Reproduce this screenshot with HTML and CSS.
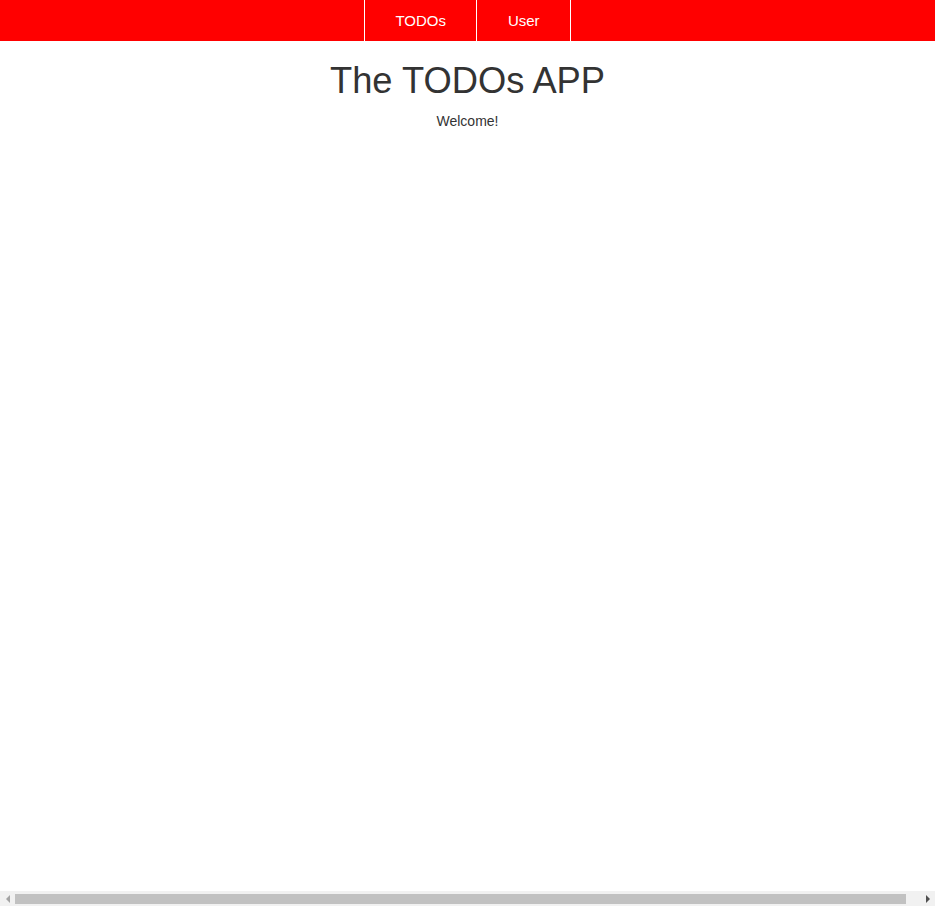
FILE: index.html
```html
<!DOCTYPE html>
<html>
<head>
<meta charset="utf-8">
<title>The TODOs APP</title>
<link rel="stylesheet" href="styles.css">
</head>
<body>
<nav class="topbar">
  <ul class="menu">
    <li class="menu-item"><a href="#">TODOs</a></li>
    <li class="menu-item"><a href="#">User</a></li>
  </ul>
</nav>
<main class="content">
  <h1 class="title">The TODOs APP</h1>
  <p class="welcome">Welcome!</p>
</main>
<div class="hscroll" aria-hidden="true">
  <span class="hscroll-btn"><span class="arrow-left"></span></span>
  <span class="hscroll-track"><span class="hscroll-thumb"></span></span>
  <span class="hscroll-btn"><span class="arrow-right"></span></span>
</div>
</body>
</html>
```
FILE: styles.css
```css
html, body {
  margin: 0;
  padding: 0;
}
body {
  font-family: "Liberation Sans", Arial, sans-serif;
  color: #333;
  background: #fff;
}
.topbar {
  background: #ff0000;
  height: 41px;
}
.menu {
  list-style: none;
  margin: 0;
  padding: 0;
  display: flex;
  justify-content: center;
  height: 41px;
}
.menu-item {
  border-left: 1px solid #fff;
  display: flex;
}
.menu-item:last-child {
  border-right: 1px solid #fff;
}
.menu-item a {
  display: flex;
  align-items: center;
  padding: 0 30.5px;
  color: #fff;
  text-decoration: none;
  font-size: 15px;
}
.content {
  text-align: center;
}
.title {
  font-size: 36.3px;
  font-weight: normal;
  margin: 19px 0 0;
  line-height: 42px;
}
.welcome {
  font-size: 14px;
  margin: 10px 0 0;
  line-height: 18px;
}

/* horizontal scrollbar overlay */
.hscroll {
  position: fixed;
  left: 0;
  right: 0;
  bottom: 0;
  height: 15px;
  background: #f1f1f1;
  display: flex;
}
.hscroll-btn {
  width: 15px;
  flex: 0 0 15px;
  display: flex;
  align-items: center;
  justify-content: center;
}
.hscroll-track {
  flex: 1;
  display: flex;
  align-items: center;
}
.hscroll-thumb {
  width: 891px;
  height: 10px;
  background: #c1c1c1;
}
.arrow-left {
  width: 0;
  height: 0;
  border-top: 4px solid transparent;
  border-bottom: 4px solid transparent;
  border-right: 4px solid #a3a3a3;
}
.arrow-right {
  width: 0;
  height: 0;
  border-top: 4px solid transparent;
  border-bottom: 4px solid transparent;
  border-left: 4px solid #505050;
}
```
